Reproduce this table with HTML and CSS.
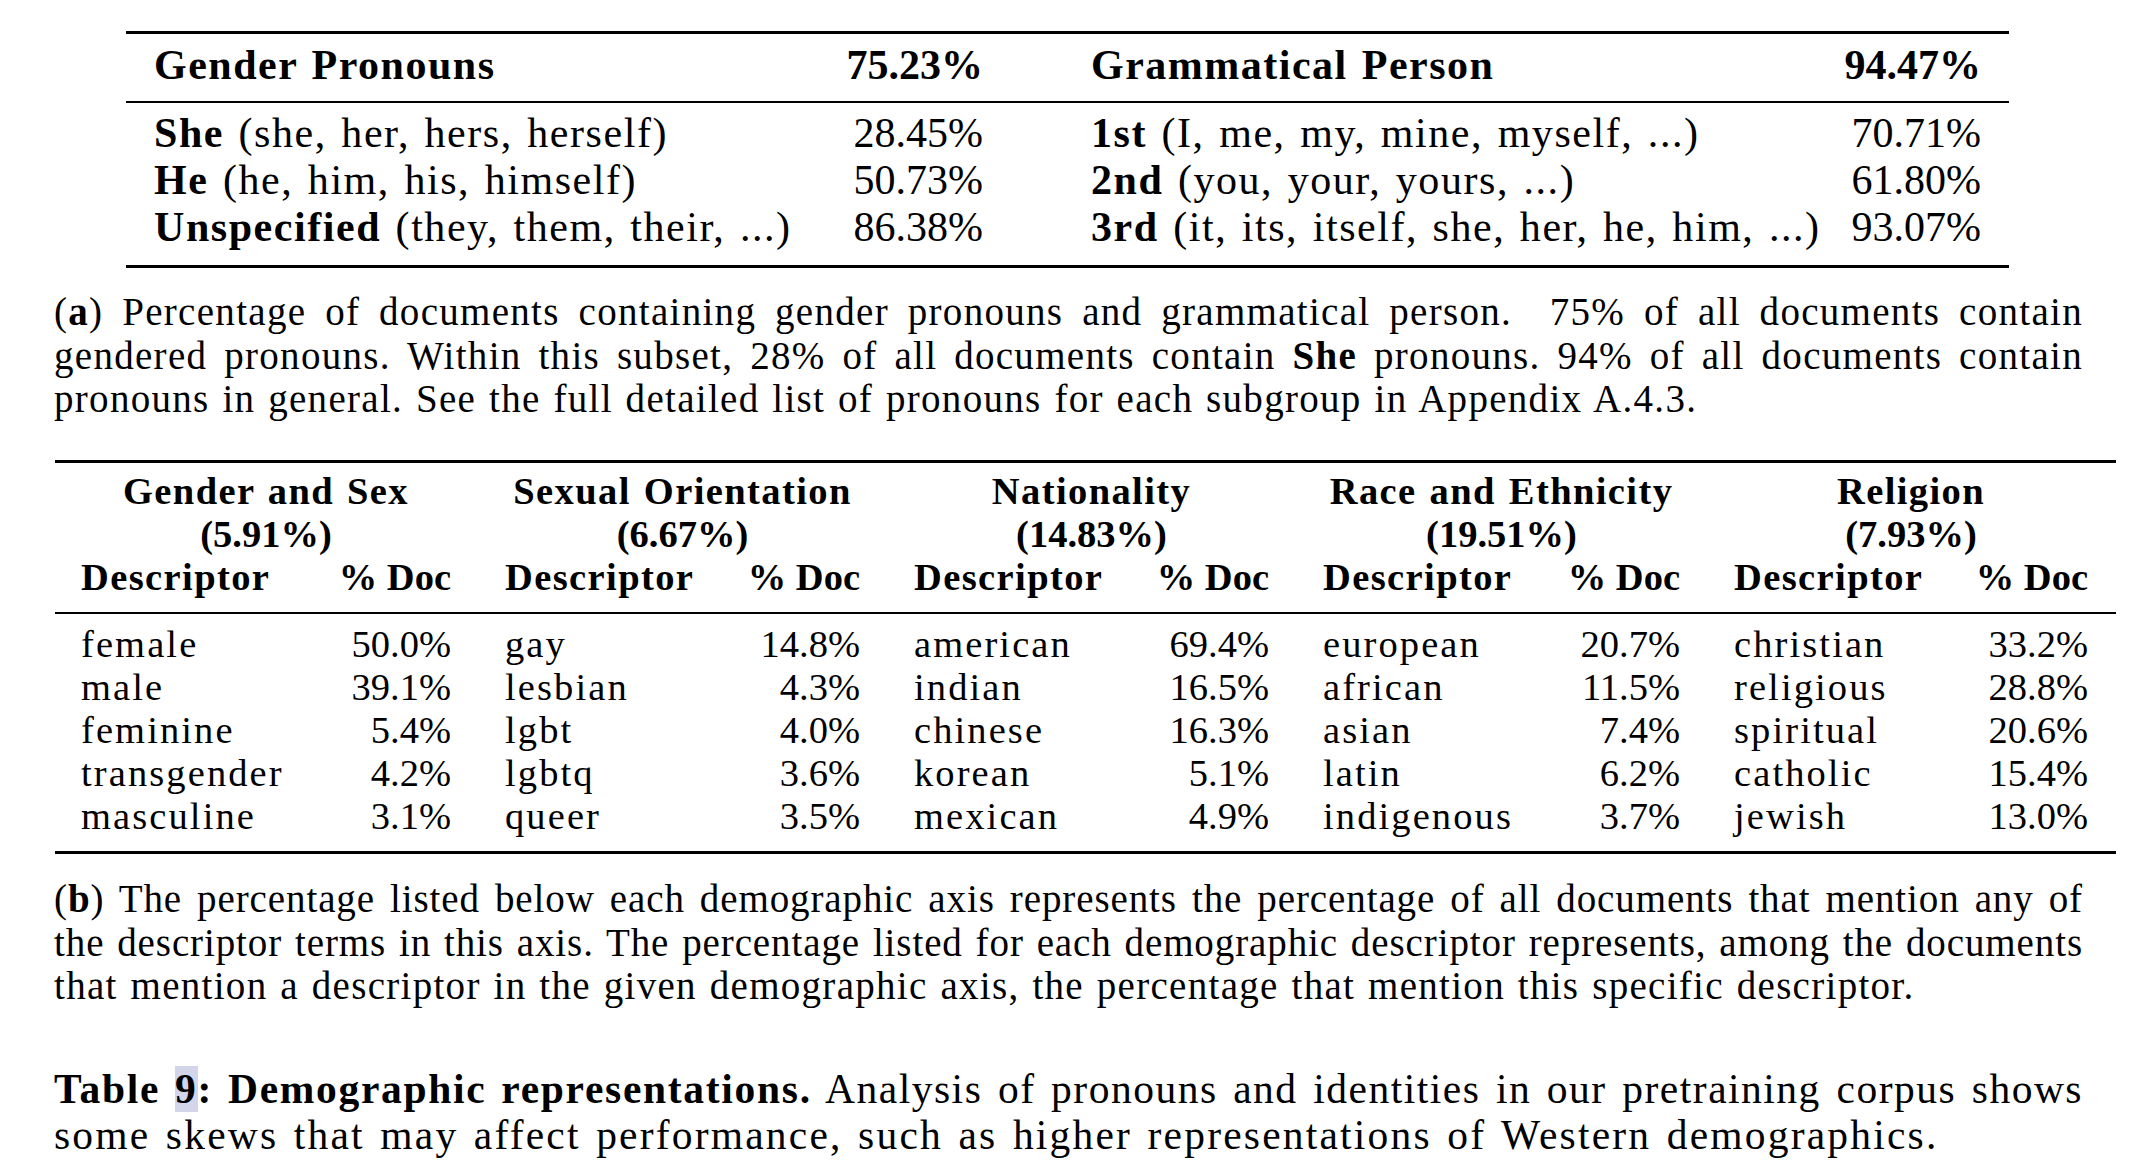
FILE: index.html
```html
<!DOCTYPE html>
<html lang="en">
<head>
<meta charset="utf-8">
<title>Table 9: Demographic representations</title>
<link rel="stylesheet" href="styles.css">
</head>
<body>
<main class="page">
  <section class="ta">
    <div class="ta-grid ta-head">
      <span>Gender Pronouns</span>
      <span class="r">75.23%</span>
      <span class="c3">Grammatical Person</span>
      <span class="r">94.47%</span>
    </div>
    <div class="ta-grid ta-body">
      <span><b>She</b> (she, her, hers, herself)</span>
      <span class="r">28.45%</span>
      <span class="c3"><b>1st</b> (I, me, my, mine, myself, ...)</span>
      <span class="r">70.71%</span>
      <span><b>He</b> (he, him, his, himself)</span>
      <span class="r">50.73%</span>
      <span class="c3"><b>2nd</b> (you, your, yours, ...)</span>
      <span class="r">61.80%</span>
      <span><b>Unspecified</b> (they, them, their, ...)</span>
      <span class="r">86.38%</span>
      <span class="c3"><b>3rd</b> (it, its, itself, she, her, he, him, ...)</span>
      <span class="r">93.07%</span>
    </div>
  </section>

  <p class="cap cap-a">
    <span class="ln">(<b>a</b>) Percentage of documents containing gender pronouns and grammatical person.&nbsp; 75% of all documents contain</span>
    <span class="ln">gendered pronouns. Within this subset, 28% of all documents contain <b>She</b> pronouns. 94% of all documents contain</span>
    <span class="ln last">pronouns in general. See the full detailed list of pronouns for each subgroup in Appendix A.4.3.</span>
  </p>

  <section class="tb">
    <div class="tb-grid tb-head">
      <span class="grp">Gender and Sex<br><span class="pct">(5.91%)</span></span>
      <span class="grp">Sexual Orientation<br><span class="pct">(6.67%)</span></span>
      <span class="grp">Nationality<br><span class="pct">(14.83%)</span></span>
      <span class="grp">Race and Ethnicity<br><span class="pct">(19.51%)</span></span>
      <span class="grp">Religion<br><span class="pct">(7.93%)</span></span>
      <span>Descriptor</span><span class="r">% Doc</span>
      <span>Descriptor</span><span class="r">% Doc</span>
      <span>Descriptor</span><span class="r">% Doc</span>
      <span>Descriptor</span><span class="r">% Doc</span>
      <span>Descriptor</span><span class="r">% Doc</span>
    </div>
    <div class="tb-grid tb-body">
      <span>female</span><span class="r">50.0%</span>
      <span>gay</span><span class="r">14.8%</span>
      <span>american</span><span class="r">69.4%</span>
      <span>european</span><span class="r">20.7%</span>
      <span>christian</span><span class="r">33.2%</span>

      <span>male</span><span class="r">39.1%</span>
      <span>lesbian</span><span class="r">4.3%</span>
      <span>indian</span><span class="r">16.5%</span>
      <span>african</span><span class="r">11.5%</span>
      <span>religious</span><span class="r">28.8%</span>

      <span>feminine</span><span class="r">5.4%</span>
      <span>lgbt</span><span class="r">4.0%</span>
      <span>chinese</span><span class="r">16.3%</span>
      <span>asian</span><span class="r">7.4%</span>
      <span>spiritual</span><span class="r">20.6%</span>

      <span>transgender</span><span class="r">4.2%</span>
      <span>lgbtq</span><span class="r">3.6%</span>
      <span>korean</span><span class="r">5.1%</span>
      <span>latin</span><span class="r">6.2%</span>
      <span>catholic</span><span class="r">15.4%</span>

      <span>masculine</span><span class="r">3.1%</span>
      <span>queer</span><span class="r">3.5%</span>
      <span>mexican</span><span class="r">4.9%</span>
      <span>indigenous</span><span class="r">3.7%</span>
      <span>jewish</span><span class="r">13.0%</span>
    </div>
  </section>

  <p class="cap cap-b">
    <span class="ln tight">(<b>b</b>) The percentage listed below each demographic axis represents the percentage of all documents that mention any of</span>
    <span class="ln tight">the descriptor terms in this axis. The percentage listed for each demographic descriptor represents, among the documents</span>
    <span class="ln last">that mention a descriptor in the given demographic axis, the percentage that mention this specific descriptor.</span>
  </p>

  <p class="cap cap-main">
    <span class="ln tight"><b>Table <span class="hl">9</span>: Demographic representations.</b> Analysis of pronouns and identities in our pretraining corpus shows</span>
    <span class="ln last">some skews that may affect performance, such as higher representations of Western demographics.</span>
  </p>
</main>
</body>
</html>
```

FILE: styles.css
```css
html, body {
  margin: 0;
  padding: 0;
  background: #ffffff;
}

body {
  font-family: "Liberation Serif", "Times New Roman", serif;
  font-size: 39px;
  color: #000000;
}

.page {
  width: 2134px;
  padding-top: 31px;
}

b {
  font-weight: bold;
}

.r {
  text-align: right;
  justify-self: end;
  letter-spacing: 0;
  word-spacing: 0;
}

/* ---------- table (a) ---------- */
.ta {
  margin-left: 126px;
  width: 1883px;
  border-top: 3px solid #000;
  border-bottom: 3px solid #000;
  font-size: 42px;
  letter-spacing: 1.55px;
  word-spacing: 2.5px;
}

.ta-grid {
  display: grid;
  grid-template-columns: 698px 131px 869px 129px;
  padding: 0 28px;
  line-height: 47px;
  white-space: nowrap;
}

.ta-head {
  font-weight: bold;
  letter-spacing: 1.5px;
  word-spacing: 2px;
  padding-top: 7.5px;
  padding-bottom: 12.5px;
  border-bottom: 2px solid #000;
}

.ta-body {
  padding-top: 7.3px;
  padding-bottom: 13.7px;
}

.c3 {
  padding-left: 108px;
}

/* ---------- captions ---------- */
.cap {
  margin: 0 0 0 54px;
  width: 2029px;
  font-size: 39px;
  line-height: 43.5px;
  letter-spacing: 1.3px;
  word-spacing: 1.8px;
}

.ln {
  display: block;
  text-align: justify;
  text-align-last: justify;
  white-space: nowrap;
}

.ln.tight {
  letter-spacing: 0.9px;
}

.ln.last {
  text-align-last: left;
}

.cap-a {
  margin-top: 22.4px;
}

.cap-b {
  margin-top: 23.4px;
}

.cap-main {
  margin-top: 58.5px;
  font-size: 41.5px;
  line-height: 46px;
  letter-spacing: 2.2px;
  word-spacing: 2.9px;
}

.cap-main .ln.tight {
  letter-spacing: 1.5px;
}

.cap-main b {
  letter-spacing: 1.7px;
  word-spacing: 2px;
}

.hl {
  background: #d3d6ea;
}

/* ---------- table (b) ---------- */
.tb {
  margin: 39.1px 0 0 55px;
  width: 2061px;
  border-top: 3px solid #000;
  border-bottom: 3px solid #000;
  font-size: 38.5px;
}

.tb-grid {
  display: grid;
  grid-template-columns: 205px 111px 187px 114px 187px 114px 189px 114px 187px 113px;
  column-gap: 54px;
  padding: 0 28px 0 26px;
  line-height: 43px;
  white-space: nowrap;
}

.tb-head {
  font-weight: bold;
  letter-spacing: 1.4px;
  word-spacing: 2px;
  padding-top: 7.5px;
  padding-bottom: 12.5px;
  border-bottom: 2px solid #000;
}

.grp {
  grid-column: span 2;
  text-align: center;
}

.pct {
  letter-spacing: 0;
}

.tb-body {
  letter-spacing: 2.1px;
  padding-top: 8.7px;
  padding-bottom: 13.3px;
}
```
